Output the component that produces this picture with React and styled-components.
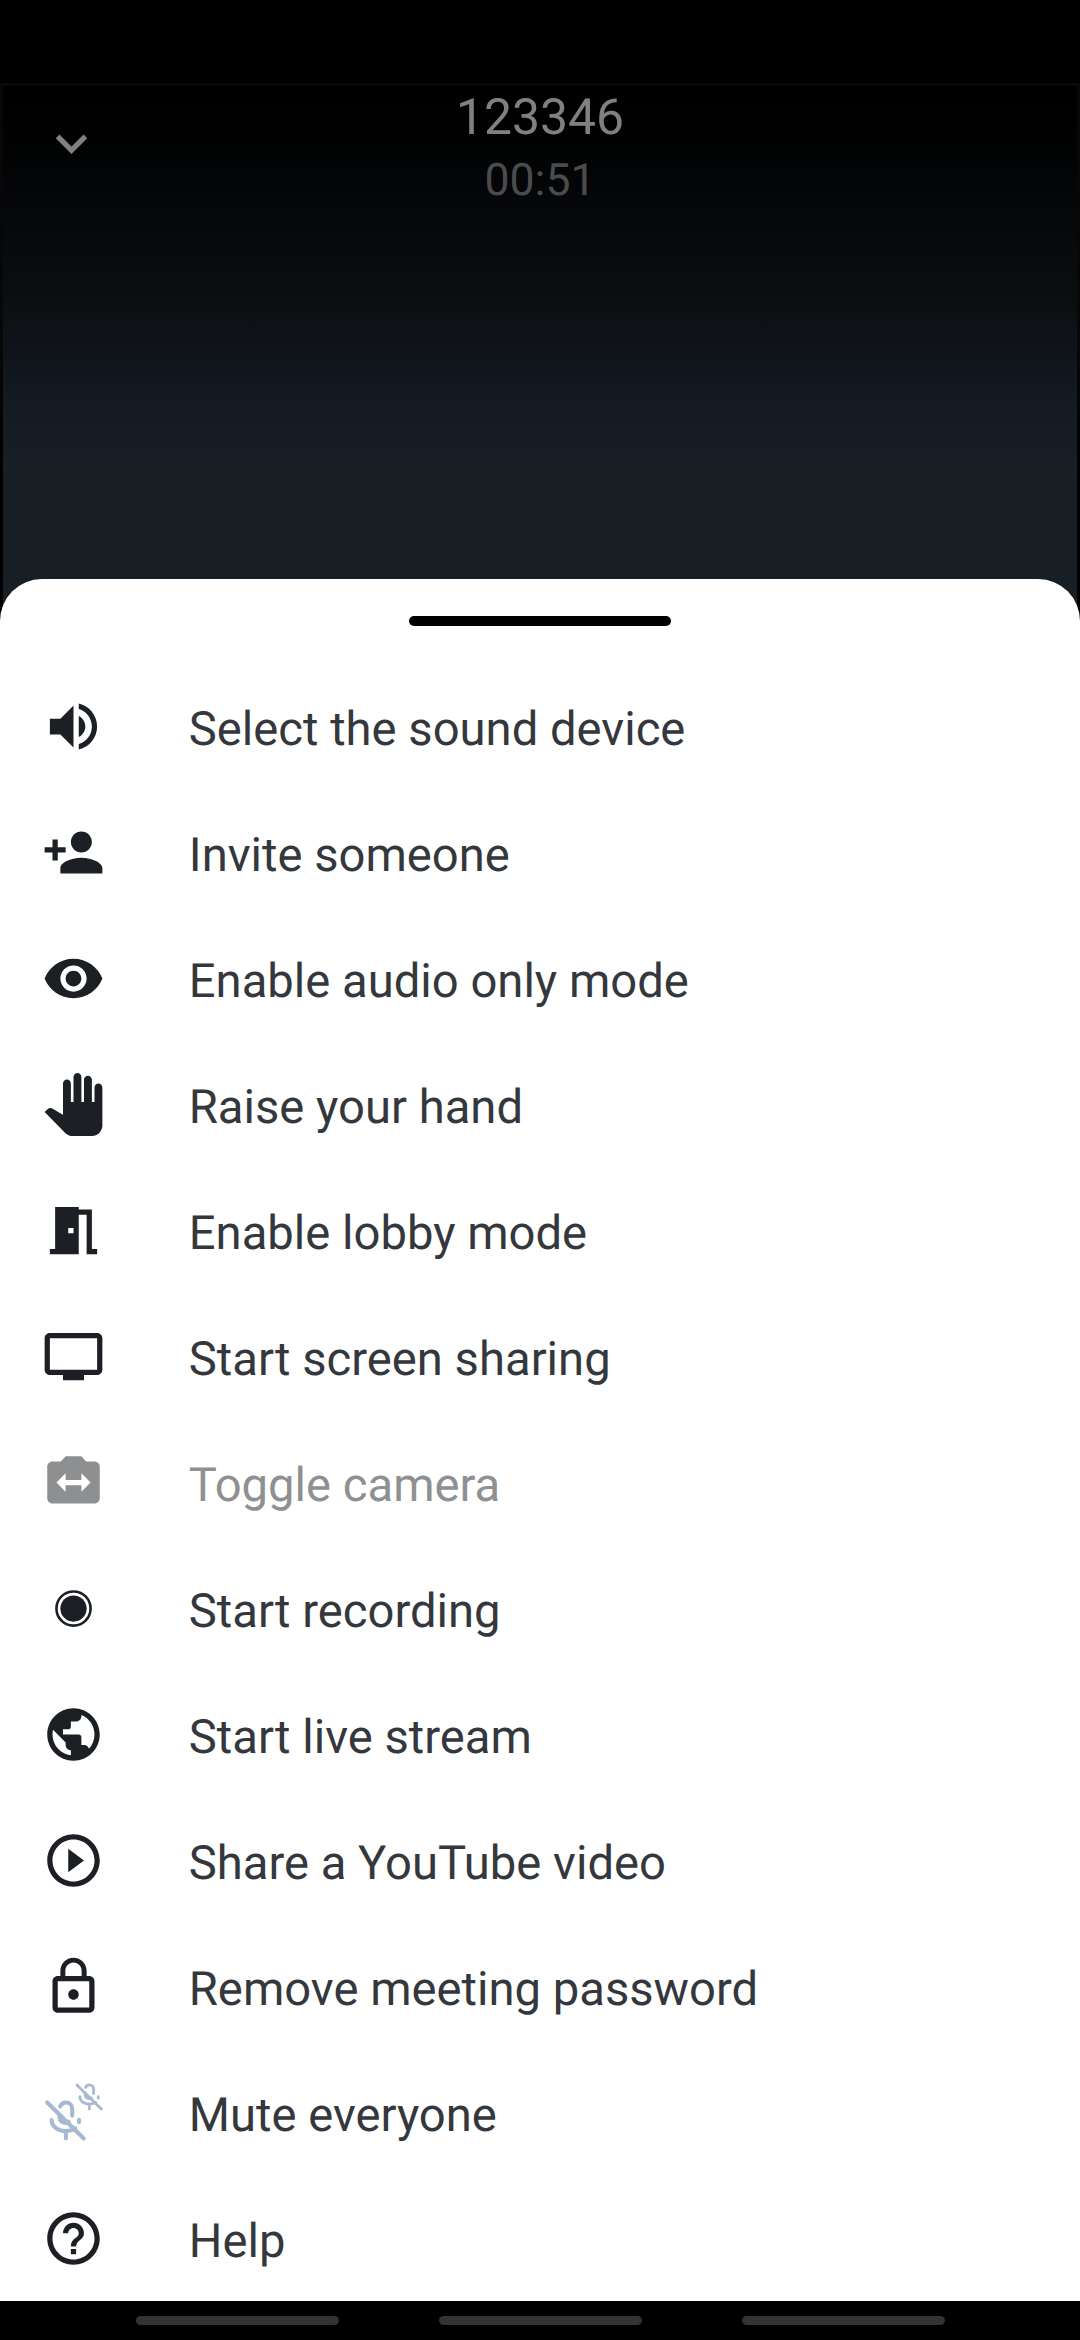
import React from 'react';
import styled, { createGlobalStyle } from 'styled-components';

const GlobalStyle = createGlobalStyle`
  * { box-sizing: border-box; }
  body { margin: 0; background: #000; }
`;

const Screen = styled.main`
  width: 1080px;
  height: 2340px;
  display: flex;
  flex-direction: column;
  background: #000;
  overflow: hidden;
  font-family: Roboto, sans-serif;
  text-rendering: geometricPrecision;
`;

const StatusBar = styled.div`
  flex: 0 0 83px;
`;

const Call = styled.section`
  flex: 0 0 538px;
  display: grid;
  grid-template-columns: 160px 1fr 160px;
  align-items: start;
  border: 3px solid #080808;
  border-bottom: 0;
  border-image: linear-gradient(#080808, #080606 50%, #000 75%) 3 3 0 3;
  background: linear-gradient(#000 0, #000100 40px, #040507 100px, #06090c 138px, #0b0e10 205px, #0f1218 255px, #121920 305px, #161d25 360px, #171e24 380px) padding-box;
`;

const Collapse = styled.button`
  margin: 26px 0 0 37px;
  padding: 0;
  border: 0;
  background: none;
  color: #808080;
  display: flex;
  width: 63px;
`;

const Heading = styled.header`
  display: flex;
  flex-direction: column;
  align-items: center;
`;

const Title = styled.h1`
  margin: 2px 0 0;
  font-size: 49.9px;
  font-weight: 400;
  line-height: 60px;
  color: #808080;
`;

const Timer = styled.time`
  font-size: 44.6px;
  line-height: 54px;
  margin-top: 5px;
  color: #4b4b4d;
`;

const Sheet = styled.section`
  flex: 0 0 1722px;
  margin-top: -42px;
  display: flex;
  flex-direction: column;
  background: #fff;
  border-radius: 42px 42px 0 0;
  overflow: hidden;
`;

const Handle = styled.div`
  flex: 0 0 10.5px;
  width: 262px;
  margin: 36.5px auto 37.3px;
  border-radius: 8px;
  background: #000;
`;

const Menu = styled.ul`
  list-style: none;
  margin: 0;
  padding: 0;
`;

const Item = styled.li`
  height: 126px;
  padding-left: 41.8px;
  display: flex;
  align-items: center;
  gap: 84px;
  color: ${(p) => (p.$disabled ? '#8e8f90' : '#1c2025')};
`;

const Label = styled.span`
  padding-top: 6px;
  font-size: 47.2px;
  line-height: 56px;
  white-space: nowrap;
  color: ${(p) => (p.$disabled ? '#8f9091' : '#34383d')};
`;

const Glyph = styled.svg`
  width: 63px;
  height: 63px;
  flex: none;
  fill: currentColor;
  display: block;
`;

const NavBar = styled.nav`
  flex: 0 0 39px;
  display: flex;
  justify-content: center;
  gap: 100px;
  padding-top: 15px;
`;

const NavHint = styled.div`
  width: 203px;
  height: 9px;
  border-radius: 5px;
  background: #333;
`;

function Icon({ d, children }) {
  return (
    <Glyph viewBox="0 0 24 24" aria-hidden="true">
      {d ? <path d={d} /> : children}
    </Glyph>
  );
}

function Mic() {
  return (
    <>
      <path d="M0 0 13.9 13.7" />
      <path d="M4.9 1.5C5.3 .5 6.2 0 7.1 0c1.4 0 2.4 1 2.4 2.4V5" />
      <path d="M4.7 4.8v.8c0 1.4 1.1 2.2 2.4 2.2.5 0 .9-.2 1.1-.5M1.65 6.7c.1 2.5 2.5 4.2 5.45 4.2 1.3 0 2.5-.3 3.6-1M7.1 10.9v2.8M12.1 6.6v.9" />
    </>
  );
}

const MUTE = (
  <g fill="none" stroke="#a7b9d1" strokeWidth="1.55" strokeLinecap="round">
    <g transform="translate(2 8.2)"><Mic /></g>
    <g transform="translate(13.3 1.5) scale(.67)"><Mic /></g>
  </g>
);

const RECORD = (
  <>
    <circle cx="12" cy="12" r="6.5" fill="none" stroke="currentColor" />
    <circle cx="12" cy="12" r="5" />
  </>
);

const ITEMS = [
  { label: 'Select the sound device', d: 'M3 9v6h4l5 5V4L7 9H3zm13.5 3c0-1.77-1.02-3.29-2.5-4.03v8.05c1.48-.73 2.5-2.25 2.5-4.02zM14 3.23v2.06c2.89.86 5 3.54 5 6.71s-2.11 5.85-5 6.71v2.06c4.01-.91 7-4.49 7-8.77s-2.99-7.86-7-8.77z' },
  { label: 'Invite someone', d: 'M15 12c2.21 0 4-1.79 4-4s-1.79-4-4-4-4 1.79-4 4 1.79 4 4 4zm-9-2V7H4v3H1v2h3v3h2v-3h3v-2H6zm9 4c-2.67 0-8 1.34-8 4v2h16v-2c0-2.66-5.33-4-8-4z' },
  { label: 'Enable audio only mode', d: 'M12 4.5C7 4.5 2.73 7.61 1 12c1.73 4.39 6 7.5 11 7.5s9.27-3.11 11-7.5c-1.73-4.39-6-7.5-11-7.5zM12 17c-2.76 0-5-2.24-5-5s2.24-5 5-5 5 2.24 5 5-2.24 5-5 5zm0-8c-1.66 0-3 1.34-3 3s1.34 3 3 3 3-1.34 3-3-1.34-3-3-3z' },
  { label: 'Raise your hand', d: 'M23 5.5V20c0 2.2-1.8 4-4 4h-7.3c-1.08 0-2.1-.43-2.85-1.19L1 14.83s1.26-1.23 1.3-1.25c.22-.19.49-.29.79-.29.22 0 .42.06.6.16.04.01 4.31 2.46 4.31 2.46V4c0-.83.67-1.5 1.5-1.5S11 3.17 11 4v7h1V1.5c0-.83.67-1.5 1.5-1.5S15 .67 15 1.5V11h1V2.5c0-.83.67-1.5 1.5-1.5s1.5.67 1.5 1.5V11h1V5.5c0-.83.67-1.5 1.5-1.5s1.5.67 1.5 1.5z' },
  { label: 'Enable lobby mode', d: 'M14 6v15H3v-2h2V3h9v1h5v15h2v2h-4V6h-3zm-4 5v2h2v-2h-2z' },
  { label: 'Start screen sharing', d: 'M21 3H3c-1.1 0-2 .9-2 2v12c0 1.1.9 2 2 2h5v2h8v-2h5c1.1 0 1.99-.9 1.99-2L23 5c0-1.1-.9-2-2-2zm0 14H3V5h18v12z' },
  { label: 'Toggle camera', disabled: true, d: 'M20 4h-3.17L15 2H9L7.17 4H4c-1.1 0-2 .9-2 2v12c0 1.1.9 2 2 2h16c1.1 0 2-.9 2-2V6c0-1.1-.9-2-2-2zm-5 11.5V13H9v2.5L5.5 12 9 8.5V11h6V8.5l3.5 3.5-3.5 3.5z' },
  { label: 'Start recording', art: RECORD },
  { label: 'Start live stream', d: 'M12 2C6.48 2 2 6.48 2 12s4.48 10 10 10 10-4.48 10-10S17.52 2 12 2zm-1 17.93c-3.95-.49-7-3.85-7-7.93 0-.62.08-1.21.21-1.79L9 15v1c0 1.1.9 2 2 2v1.93zm6.9-2.54c-.26-.81-1-1.39-1.9-1.39h-1v-3c0-.55-.45-1-1-1H8v-2h2c.55 0 1-.45 1-1V7h2c1.1 0 2-.9 2-2v-.41c2.93 1.19 5 4.06 5 7.41 0 2.08-.8 3.97-2.1 5.39z' },
  { label: 'Share a YouTube video', d: 'M10 16.5l6-4.5-6-4.5v9zM12 2C6.48 2 2 6.48 2 12s4.48 10 10 10 10-4.48 10-10S17.52 2 12 2zm0 18c-4.41 0-8-3.59-8-8s3.59-8 8-8 8 3.59 8 8-3.59 8-8 8z' },
  { label: 'Remove meeting password', d: 'M12 17c1.1 0 2-.9 2-2s-.9-2-2-2-2 .9-2 2 .9 2 2 2zm6-9h-1V6c0-2.76-2.24-5-5-5S7 3.24 7 6v2H6c-1.1 0-2 .9-2 2v10c0 1.1.9 2 2 2h12c1.1 0 2-.9 2-2V10c0-1.1-.9-2-2-2zM8.9 6c0-1.71 1.39-3.1 3.1-3.1s3.1 1.39 3.1 3.1v2H8.9V6zM18 20H6V10h12v10z' },
  { label: 'Mute everyone', art: MUTE },
  { label: 'Help', d: 'M11 18h2v-2h-2v2zm1-16C6.48 2 2 6.48 2 12s4.48 10 10 10 10-4.48 10-10S17.52 2 12 2zm0 18c-4.41 0-8-3.59-8-8s3.59-8 8-8 8 3.59 8 8-3.59 8-8 8zm0-14c-2.21 0-4 1.79-4 4h2c0-1.1.9-2 2-2s2 .9 2 2c0 2-3 1.75-3 5h2c0-2.25 3-2.5 3-5 0-2.21-1.79-4-4-4z' },
];

export default function App() {
  return (
    <Screen>
      <GlobalStyle />
      <StatusBar />
      <Call>
        <Collapse aria-label="Collapse">
          <Icon d="M16.59 8.59L12 13.17 7.41 8.59 6 10l6 6 6-6z" />
        </Collapse>
        <Heading>
          <Title>123346</Title>
          <Timer>00:51</Timer>
        </Heading>
      </Call>
      <Sheet>
        <Handle />
        <Menu>
          {ITEMS.map(({ label, d, art, disabled }) => (
            <Item key={label} $disabled={disabled}>
              <Icon d={d}>{art}</Icon>
              <Label $disabled={disabled}>{label}</Label>
            </Item>
          ))}
        </Menu>
      </Sheet>
      <NavBar>
        <NavHint />
        <NavHint />
        <NavHint />
      </NavBar>
    </Screen>
  );
}
